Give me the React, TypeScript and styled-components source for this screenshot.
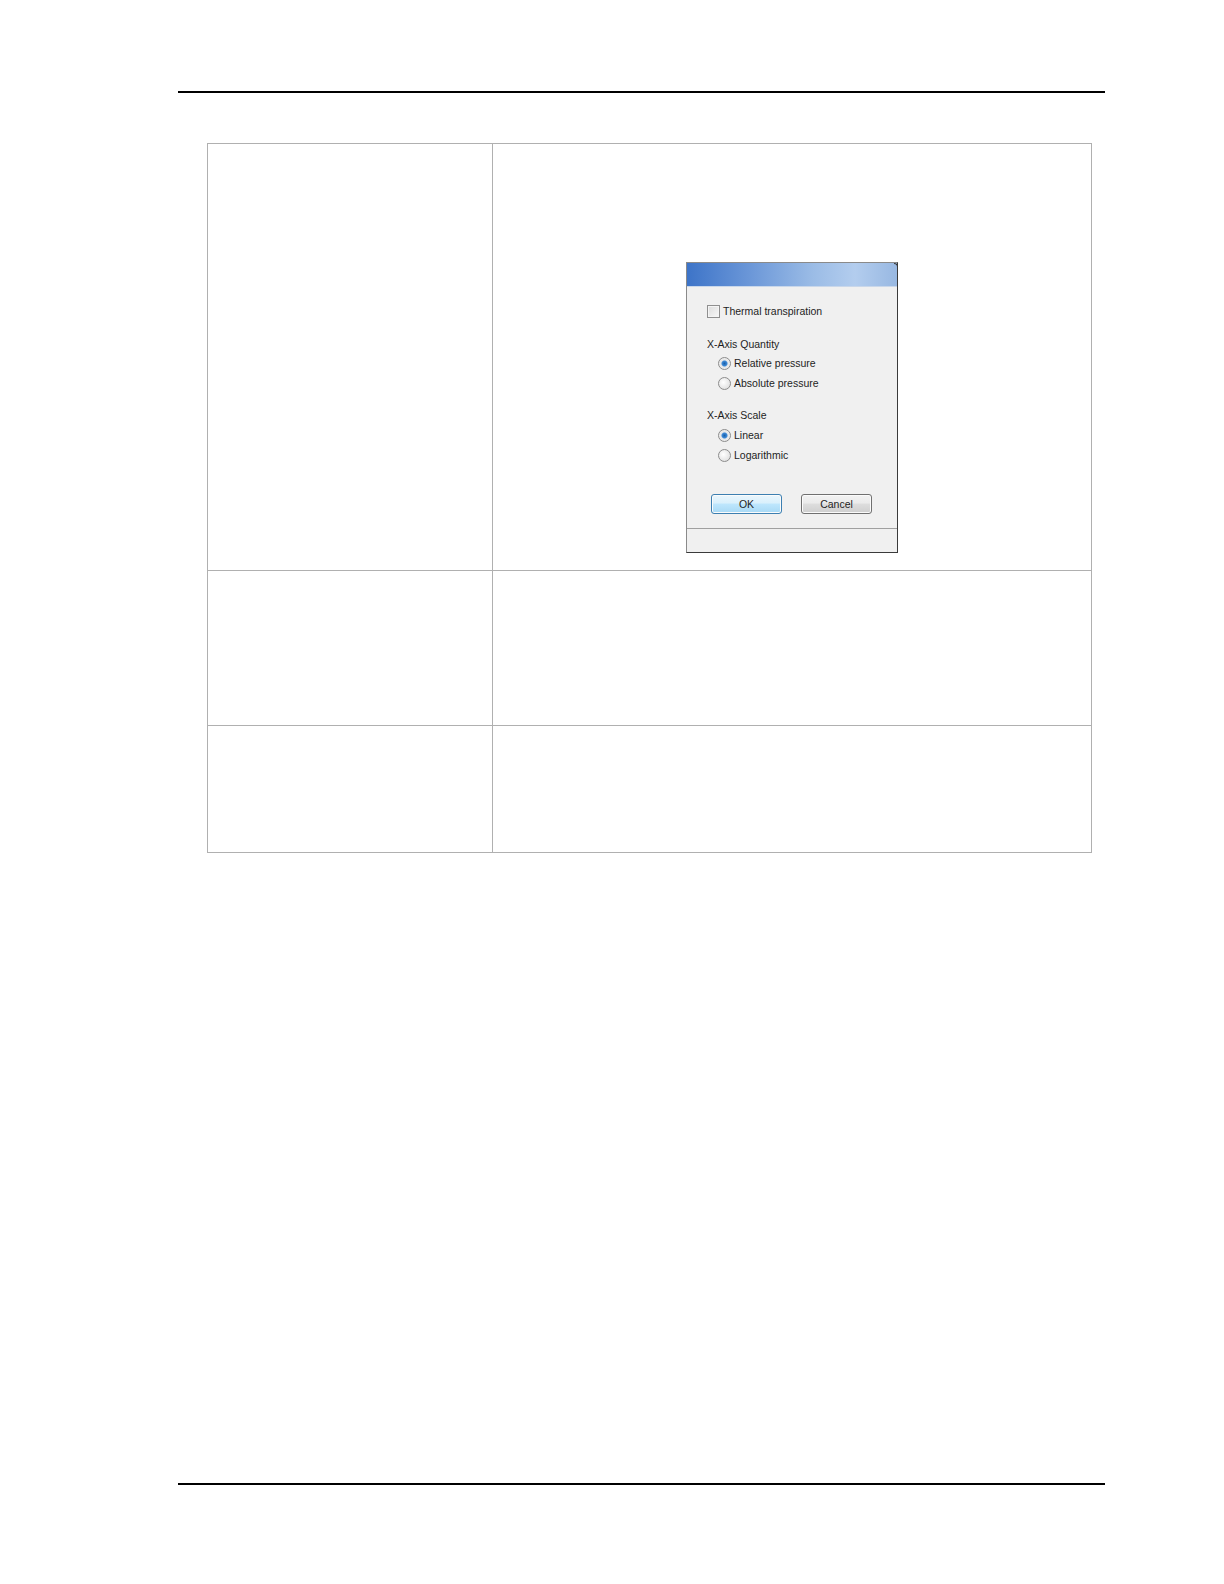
import React from 'react';
import styled, { createGlobalStyle } from 'styled-components';

// --------------------------------------------------------------- //
//                         Page layout                             //
// --------------------------------------------------------------- //

const GlobalStyle = createGlobalStyle`
  html, body {
    margin: 0;
    padding: 0;
    background: #ffffff;
  }
  body {
    font-family: "Liberation Sans", Arial, sans-serif;
  }
`;

const Page = styled.div`
  height: 1560px;
  display: flex;
  flex-direction: column;
  box-sizing: border-box;
  padding: 91px 0 75px;
`;

const Rule = styled.div`
  margin-left: 178px;
  width: 927px;
  height: 2px;
  background: #000000;
`;

const FooterRule = styled(Rule)`
  margin-top: auto;
`;

const Table = styled.div`
  margin: 50px 0 0 207px;
  width: 884px;
  display: grid;
  grid-template-columns: 285px 1fr;
  border-top: 1px solid #b0b0b0;
  border-left: 1px solid #b0b0b0;
`;

const Cell = styled.div<{ $h: number }>`
  height: ${(p) => p.$h}px;
  box-sizing: border-box;
  border-right: 1px solid #b0b0b0;
  border-bottom: 1px solid #b0b0b0;
  display: flex;
  justify-content: center;
  align-items: flex-start;
`;

const ImageCell = styled(Cell)`
  padding-top: 118px;
`;

// --------------------------------------------------------------- //
//                           Dialog                                //
// --------------------------------------------------------------- //

const Dialog = styled.div`
  width: 212px;
  height: 291px;
  box-sizing: border-box;
  border: 1px solid #8a8a8a;
  border-right-color: #3a3a3a;
  border-bottom-color: #3a3a3a;
  background: #f0f0f0;
  display: flex;
  flex-direction: column;
  font-size: 10.5px;
  color: #1e1e1e;
`;

const TitleBar = styled.div`
  height: 23px;
  flex: none;
  position: relative;
  background: linear-gradient(90deg, #3d74c8 0%, #6b97d8 30%, #9bbce6 60%, #b3cdee 80%, #98b8e2 100%);
  border-bottom: 1px solid #c9d7ea;
  &::after {
    content: '';
    position: absolute;
    right: -1px;
    top: 0;
    width: 4px;
    height: 5px;
    border-top: 1px solid #3a3a3a;
    border-right: 1px solid #3a3a3a;
    border-top-right-radius: 4px;
    box-sizing: border-box;
  }
`;

const Body = styled.div`
  flex: 1;
  display: flex;
  flex-direction: column;
  padding: 16px 0 0 20px;
`;

const Row = styled.div<{ $top: number; $indent?: number }>`
  display: flex;
  align-items: center;
  gap: 3px;
  height: ${(p) => (p.$indent ? 20 : 16)}px;
  margin-top: ${(p) => p.$top}px;
  padding-left: ${(p) => p.$indent ?? 0}px;
`;

const CheckBox = styled.span`
  width: 11px;
  height: 11px;
  border: 1px solid #8f8f8f;
  background: linear-gradient(135deg, #dcdcdc, #f8f8f8);
  box-shadow: inset 0 0 0 1px #f4f4f4;
  flex: none;
`;

const Radio = styled.span<{ $on?: boolean }>`
  width: 11px;
  height: 11px;
  border-radius: 50%;
  border: 1px solid #8c8c8c;
  background: ${(p) =>
    p.$on
      ? 'radial-gradient(circle, #1a5fa8 0, #3d8ad8 2.5px, #e6e6e6 3.5px, #f6f6f6 100%)'
      : 'radial-gradient(circle at 40% 40%, #ffffff, #d8d8d8)'};
  flex: none;
`;

const Buttons = styled.div`
  display: flex;
  gap: 19px;
  margin: 29px 0 0 4px;
`;

const Button = styled.div<{ $default?: boolean }>`
  width: 71px;
  height: 20px;
  box-sizing: border-box;
  border: 1px solid ${(p) => (p.$default ? '#3c7fb1' : '#707070')};
  border-radius: 3px;
  background: ${(p) =>
    p.$default
      ? 'linear-gradient(#eaf6fd 0%, #d9f0fc 45%, #bee6fd 50%, #a7d9f5 100%)'
      : 'linear-gradient(#f2f2f2 0%, #ebebeb 45%, #dddddd 50%, #cfcfcf 100%)'};
  box-shadow: inset 0 0 0 1px #fbfbfb;
  display: flex;
  align-items: center;
  justify-content: center;
  font-size: 10.5px;
`;

const StatusBar = styled.div`
  height: 23px;
  flex: none;
  border-top: 1px solid #a0a0a0;
  background: #f0f0f0;
`;

const SettingsDialog = () => (
  <Dialog>
    <TitleBar />
    <Body>
      <Row $top={0}>
        <CheckBox />
        <span>Thermal transpiration</span>
      </Row>
      <Row $top={17}>X-Axis Quantity</Row>
      <Row $top={1} $indent={11}>
        <Radio $on />
        <span>Relative pressure</span>
      </Row>
      <Row $top={0} $indent={11}>
        <Radio />
        <span>Absolute pressure</span>
      </Row>
      <Row $top={14}>X-Axis Scale</Row>
      <Row $top={2} $indent={11}>
        <Radio $on />
        <span>Linear</span>
      </Row>
      <Row $top={0} $indent={11}>
        <Radio />
        <span>Logarithmic</span>
      </Row>
      <Buttons>
        <Button $default>OK</Button>
        <Button>Cancel</Button>
      </Buttons>
    </Body>
    <StatusBar />
  </Dialog>
);

export default function App() {
  return (
    <>
      <GlobalStyle />
      <Page>
        <Rule />
        <Table>
          <Cell $h={427} />
          <ImageCell $h={427}>
            <SettingsDialog />
          </ImageCell>
          <Cell $h={155} />
          <Cell $h={155} />
          <Cell $h={127} />
          <Cell $h={127} />
        </Table>
        <FooterRule />
      </Page>
    </>
  );
}
